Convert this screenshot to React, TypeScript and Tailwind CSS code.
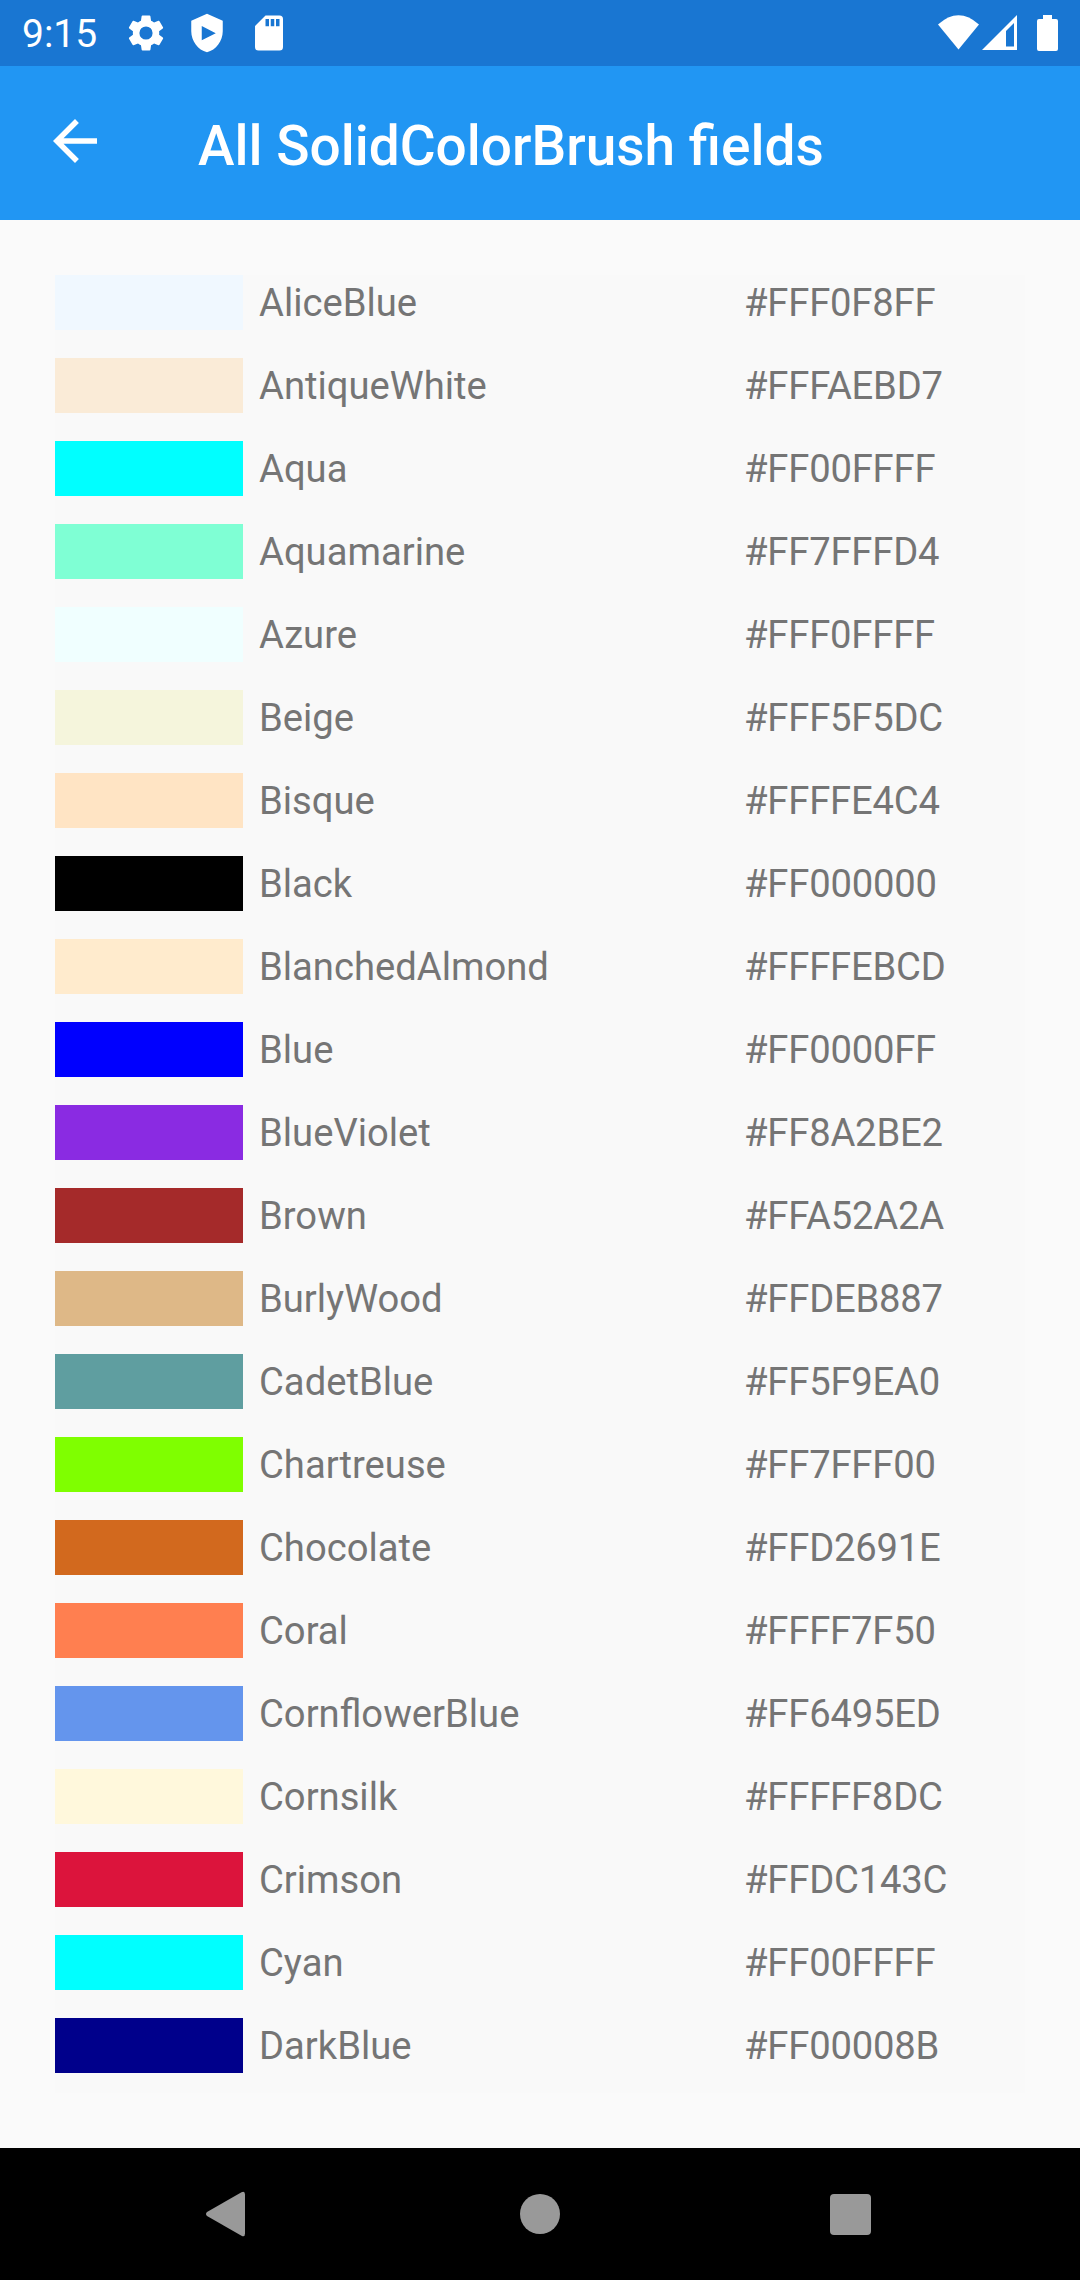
const colors: [string, string][] = [
  ["AliceBlue", "F0F8FF"], ["AntiqueWhite", "FAEBD7"], ["Aqua", "00FFFF"], ["Aquamarine", "7FFFD4"],
  ["Azure", "F0FFFF"], ["Beige", "F5F5DC"], ["Bisque", "FFE4C4"], ["Black", "000000"],
  ["BlanchedAlmond", "FFEBCD"], ["Blue", "0000FF"], ["BlueViolet", "8A2BE2"], ["Brown", "A52A2A"],
  ["BurlyWood", "DEB887"], ["CadetBlue", "5F9EA0"], ["Chartreuse", "7FFF00"], ["Chocolate", "D2691E"],
  ["Coral", "FF7F50"], ["CornflowerBlue", "6495ED"], ["Cornsilk", "FFF8DC"], ["Crimson", "DC143C"],
  ["Cyan", "00FFFF"], ["DarkBlue", "00008B"],
];

function StatusBar() {
  return (
    <div className="flex h-[66px] shrink-0 items-center bg-[#1976d2] text-white">
      <span className="ml-[22px] w-[102px] pt-[3px] text-[39px] leading-[63px]">9:15</span>
      <svg className="h-[44px] w-[44px]" viewBox="0 0 24 24" fill="currentColor">
        <path d="M19.14 12.94c.04-.3.06-.61.06-.94s-.02-.64-.07-.94l2.03-1.58a.49.49 0 0 0 .12-.61l-1.92-3.32a.49.49 0 0 0-.59-.22l-2.39.96a7 7 0 0 0-1.62-.94l-.36-2.54a.48.48 0 0 0-.48-.41h-3.84a.48.48 0 0 0-.47.41l-.36 2.54c-.59.24-1.13.57-1.62.94l-2.39-.96a.48.48 0 0 0-.59.22L2.74 8.87a.48.48 0 0 0 .12.61l2.03 1.58a6 6 0 0 0 0 1.88l-2.03 1.58a.49.49 0 0 0-.12.61l1.92 3.32c.12.22.37.29.59.22l2.39-.96c.5.38 1.03.7 1.62.94l.36 2.54c.05.24.24.41.48.41h3.84c.24 0 .44-.17.47-.41l.36-2.54c.59-.24 1.13-.56 1.62-.94l2.39.96c.22.08.47 0 .59-.22l1.92-3.32a.48.48 0 0 0-.12-.61zM12 15.6a3.6 3.6 0 1 1 0-7.2 3.6 3.6 0 0 1 0 7.2z" />
      </svg>
      <svg className="ml-[18px] h-[42px] w-[42px]" viewBox="0 0 24 24" fill="currentColor">
        <path fillRule="evenodd" d="M12 1 3 5v6c0 5.55 3.84 10.74 9 12 5.16-1.26 9-6.45 9-12V5zM9 8v8.2l8-4.1z" />
      </svg>
      <svg className="ml-[20px] h-[42px] w-[42px]" viewBox="0 0 24 24" fill="currentColor">
        <path d="M18 2h-8L4.02 8 4 20a2 2 0 0 0 2 2h12a2 2 0 0 0 2-2V4a2 2 0 0 0-2-2zm-6 6.2h-2V4h2zm3 0h-2V4h2zm3 0h-2V4h2z" />
      </svg>
      <svg className="ml-auto mr-[22px] h-[66px] w-[120px]" viewBox="938 0 120 66" fill="currentColor">
        <path d="M938 24.5Q958.5 6 979 24.5L958.5 49.5z" />
        <path fillRule="evenodd" d="M982 50 1017 15v35zM1006 31v15.5h8V23z" />
        <path d="M1043 15h9v4h4q2 0 2 2v28q0 2-2 2h-17q-2 0-2-2V21q0-2 2-2h4z" />
      </svg>
    </div>
  );
}

function NavigationBar() {
  return (
    <div className="flex h-[132px] shrink-0 items-center bg-black pl-[206px] text-[#999999]">
      <svg className="h-[46px] w-[40px]" viewBox="0 0 40 46" fill="currentColor">
        <path d="M1 21 35.5 1.2Q39 -.5 39 3.500V42.500Q39 46.500 35.500 44.800L1 25Q-1 23 1 21z" />
      </svg>
      <span className="ml-[274px] h-[40px] w-[40px] rounded-full bg-[#999999]" />
      <span className="ml-[270px] mt-px h-[41px] w-[41px] rounded-[4px] bg-[#999999]" />
    </div>
  );
}

export default function App() {
  return (
    <div className="flex h-[2280px] w-[1080px] flex-col bg-[#fafafa] font-['Roboto',sans-serif]">
      <StatusBar />
      <header className="flex h-[154px] shrink-0 items-center bg-[#2196f3] text-white">
        <svg className="mb-[4px] ml-[42px] h-[66px] w-[66px]" viewBox="0 0 24 24" fill="currentColor">
          <path d="M20 11H7.830l5.590-5.590L12 4l-8 8 8 8 1.410-1.410L7.830 13H20z" />
        </svg>
        <h1 className="ml-[90px] pt-[7px] text-[55px] font-medium">All SolidColorBrush fields</h1>
      </header>
      <ul className="mx-[55px] mt-[55px] flex h-[1818px] shrink-0 flex-col bg-[#f9f9f9] text-[#757575]">
        {colors.map(([name, hex]) => (
          <li key={name} className="flex h-[83px] shrink-0 items-start">
            <span className="h-[55px] w-[188px]" style={{ backgroundColor: "#" + hex }} />
            <span className="ml-[16px] w-[485px] text-[38.2px] leading-[57px]">{name}</span>
            <span className="text-[38.2px] leading-[57px] tracking-[-0.2px]">#FF{hex}</span>
          </li>
        ))}
      </ul>
      <div className="grow" />
      <NavigationBar />
    </div>
  );
}
